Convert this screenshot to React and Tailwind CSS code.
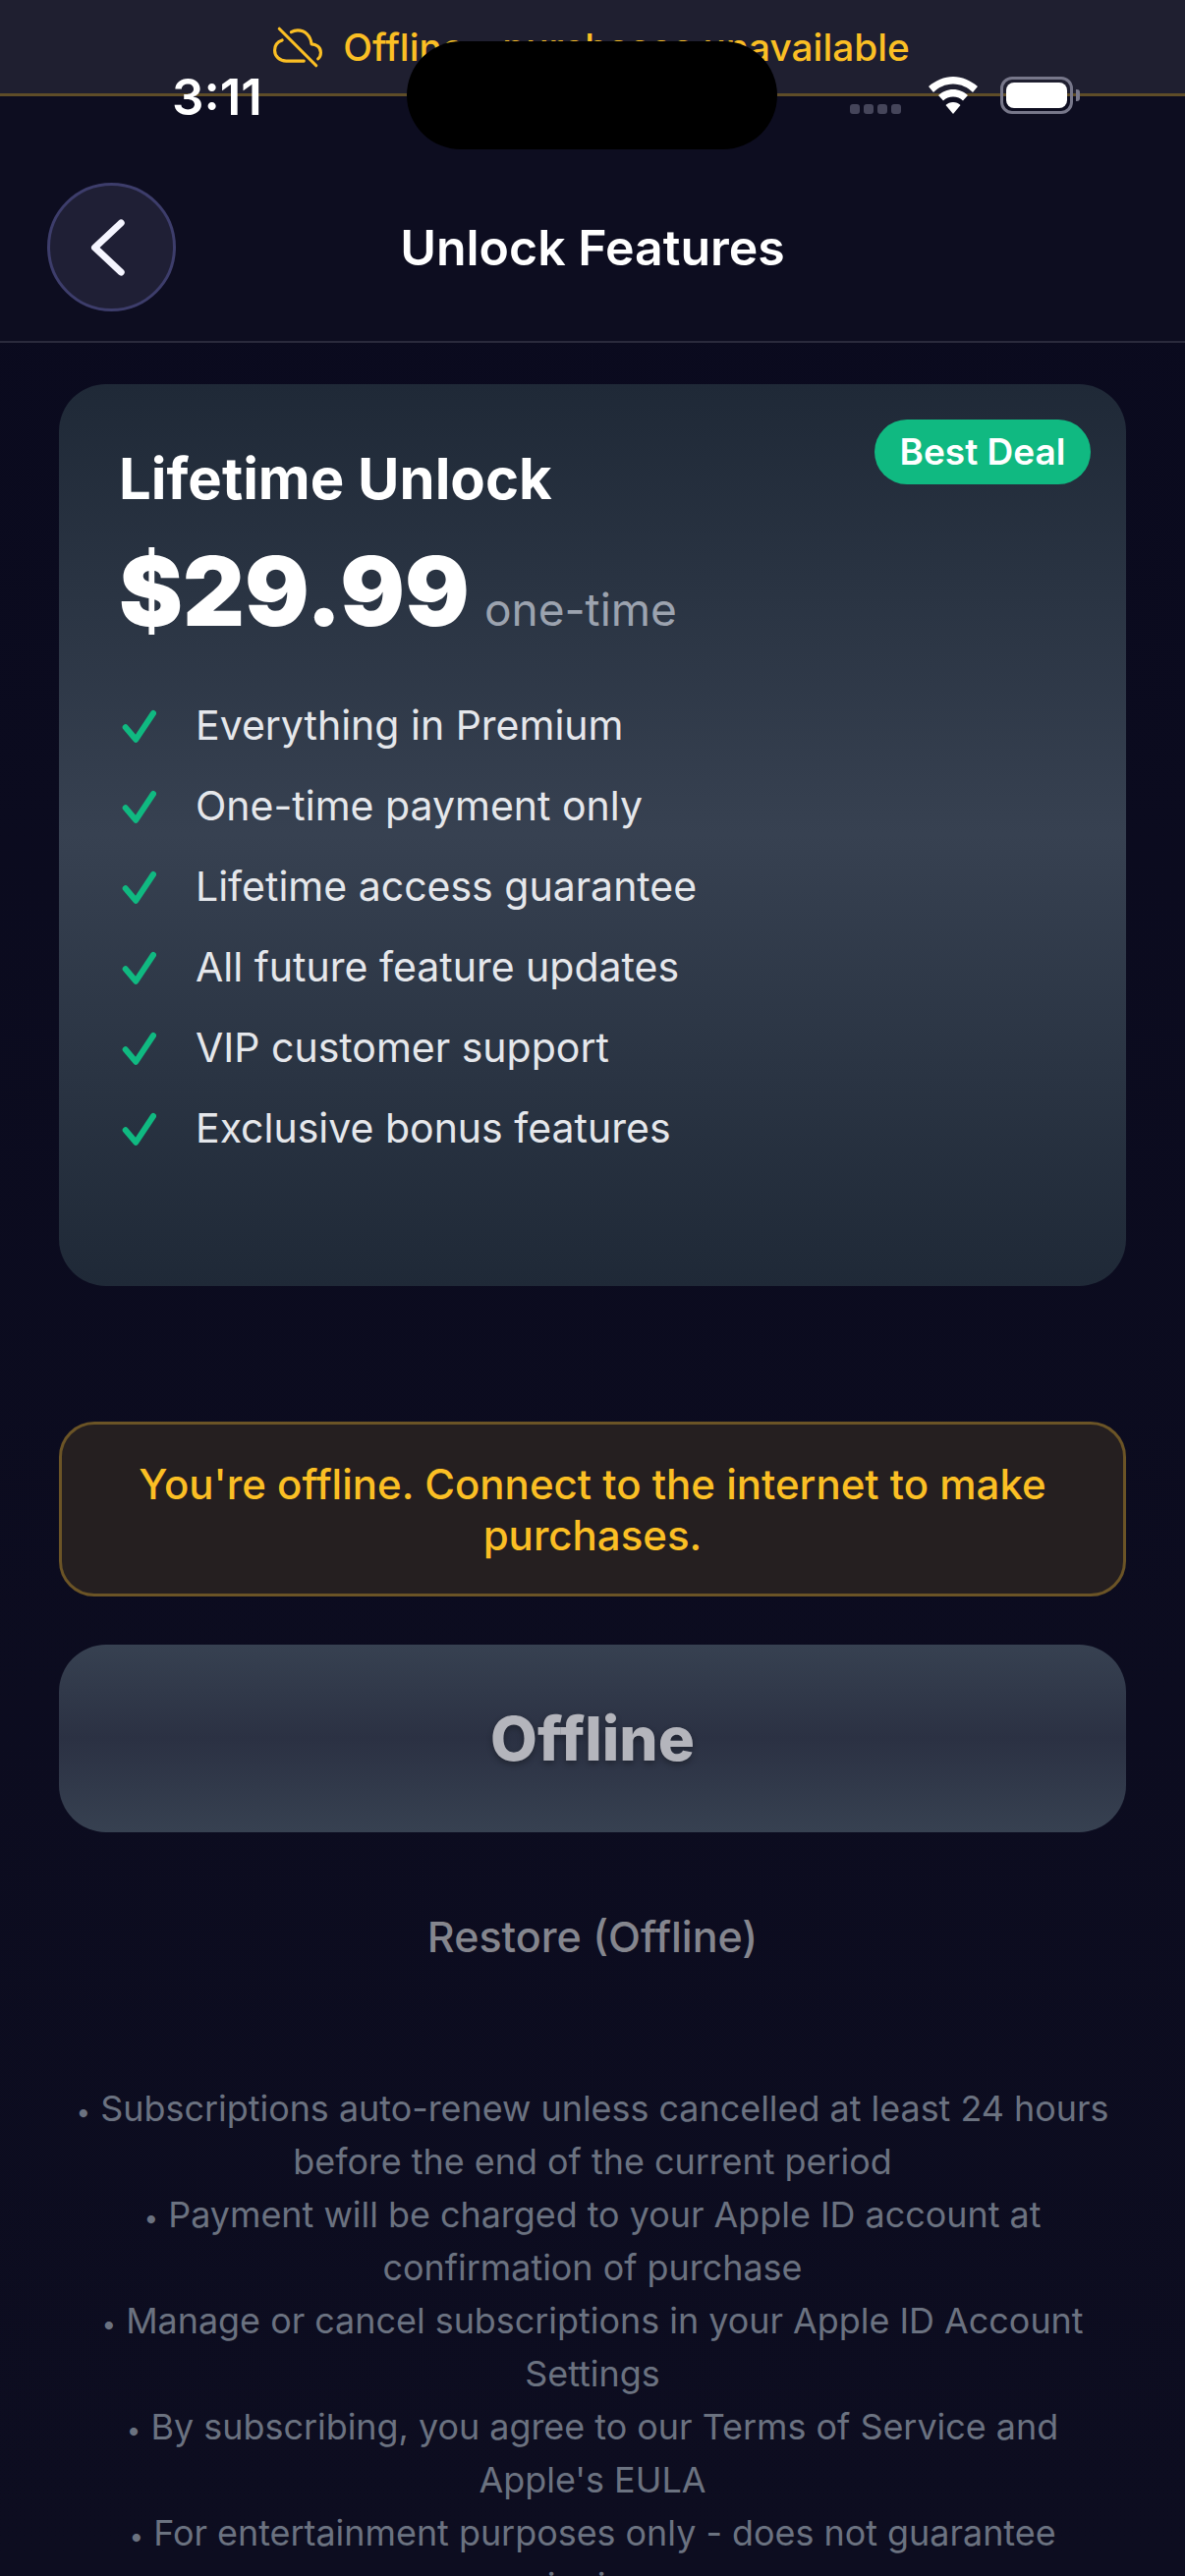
import { IoCloudOfflineOutline } from "react-icons/io5";

const features = [
  "Everything in Premium",
  "One-time payment only",
  "Lifetime access guarantee",
  "All future feature updates",
  "VIP customer support",
  "Exclusive bonus features",
];

const terms = [
  "Subscriptions auto-renew unless cancelled at least 24 hours before the end of the current period",
  "Payment will be charged to your Apple ID account at confirmation of purchase",
  "Manage or cancel subscriptions in your Apple ID Account Settings",
  "By subscribing, you agree to our Terms of Service and Apple's EULA",
  "For entertainment purposes only - does not guarantee winnings",
];

function CheckIcon() {
  return (
    <svg className="w-[38px] h-[38px] shrink-0" viewBox="0 0 38 38" fill="none" stroke="#10b981" strokeWidth="6" strokeLinecap="round" strokeLinejoin="round">
      <path d="M6.700 21.300 L17.300 33.700 L35 7" />
    </svg>
  );
}

function StatusBar() {
  return (
    <div className="absolute top-0 left-0 w-full h-[152px]">
      <span className="absolute left-[175px] top-[72px] text-[51px] leading-[54px] font-semibold text-white">3:11</span>
      <div className="absolute left-[414px] top-[42px] w-[377px] h-[110px] rounded-[55px] bg-black"></div>
      <div className="absolute left-[865px] top-[106px] flex gap-[4px]">
        <div className="w-[10px] h-[10px] rounded-[3px] bg-[#45455a]"></div>
        <div className="w-[10px] h-[10px] rounded-[3px] bg-[#45455a]"></div>
        <div className="w-[10px] h-[10px] rounded-[3px] bg-[#45455a]"></div>
        <div className="w-[10px] h-[10px] rounded-[3px] bg-[#45455a]"></div>
      </div>
      <svg className="absolute left-[945px] top-[78px]" width="50" height="38" viewBox="0 0 50 38" fill="#ffffff">
        <path d="M25 0 C34 0 43 4 50 10 L45 16 C40 11 33 7.500 25 7.500 C17 7.500 10 11 5 16 L0 10 C7 4 16 0 25 0 Z" />
        <path d="M25 13 C31 13 36 15.500 40 19 L35 24.500 C32.500 22 29 20.500 25 20.500 C21 20.500 17.500 22 15 24.500 L10 19 C14 15.500 19 13 25 13 Z" />
        <path d="M25 26 C28 26 30.500 27 32.500 29 L25 38 L17.500 29 C19.500 27 22 26 25 26 Z" />
      </svg>
      <div className="absolute left-[1018px] top-[78px] w-[74px] h-[38px] rounded-[12px] border-[3px] border-[#77778a] p-[3px]">
        <div className="w-full h-full rounded-[8px] bg-white"></div>
      </div>
      <div className="absolute left-[1095px] top-[91px] w-[4px] h-[12px] rounded-r-[3px] bg-[#77778a]"></div>
    </div>
  );
}

export default function App() {
  return (
    <div className="relative w-[1206px] h-[2622px] overflow-hidden bg-gradient-to-b from-[#0a0a1e] to-[#0d0d20] font-['Inter',sans-serif]">
      {/* Offline banner */}
      <div className="h-[98px] bg-[#1f1f30] border-b-[3px] border-[#5f4d28] flex items-start justify-center gap-[21px] pt-[19px] pr-[5px]">
        <IoCloudOfflineOutline size={50} className="text-[#fbbf24] mt-[4px] ml-[3px]" />
        <span className="text-[38.800px] leading-[58px] font-medium text-[#fbbf24]">Offline - purchases unavailable</span>
      </div>

      {/* Header */}
      <div className="h-[251px] bg-[#0d0d20] border-b-[2px] border-[#2a2a3c] flex items-end px-[48px] pb-[30px]">
        <div className="w-[131px] h-[131px] rounded-full bg-[#1f1f35] border-[3px] border-[#3d3d6b] flex items-center justify-center">
          <svg width="48" height="62" viewBox="0 0 48 62" fill="none" stroke="#f5f5ff" strokeWidth="7" strokeLinecap="round" strokeLinejoin="round">
            <path d="M33.200 6 L6.500 31 L33.200 56" />
          </svg>
        </div>
        <div className="flex-1 h-[131px] flex items-center justify-center text-[50px] leading-[60px] font-semibold text-white pr-[131px]">Unlock Features</div>
      </div>

      {/* Plan card */}
      <div className="px-[60px] pt-[42px]">
        <div className="relative h-[918px] rounded-[48px] bg-gradient-to-b from-[#1f2937] via-[#374151] to-[#1f2937] px-[61px] pt-[60px]">
          <div className="absolute right-[36px] top-[36px] h-[66px] w-[220px] rounded-full bg-[#10b981] flex items-center justify-center text-[37px] font-semibold text-white">Best Deal</div>
          <div className="text-[58px] leading-[72px] font-bold text-white">Lifetime Unlock</div>
          <div className="flex items-baseline gap-[15px] mt-[25px]">
            <span className="text-[97.500px] leading-[108px] font-black text-white">$29.99</span>
            <span className="text-[46px] leading-[60px] text-[#9ca3af]">one-time</span>
          </div>
          <div className="flex flex-col gap-[22px] mt-[52px]">
            {features.map((f) => (
              <div key={f} className="flex items-center gap-[40px] h-[60px]">
                <CheckIcon />
                <span className="text-[41px] leading-[60px] text-[#e5e7eb]">{f}</span>
              </div>
            ))}
          </div>
        </div>

        {/* Offline warning */}
        <div className="mt-[138px] h-[178px] rounded-[36px] bg-[#251f20] border-[3px] border-[#6b5426] flex items-center justify-center px-[60px] pt-[2px] text-center text-[42px] leading-[52px] font-medium text-[#fbbf24]">
          You're offline. Connect to the internet to make purchases.
        </div>

        {/* Buy button */}
        <div className="mt-[49px] h-[191px] rounded-[48px] bg-gradient-to-b from-[#374151] via-[#2b3143] to-[#374151] flex items-center justify-center text-[62px] font-extrabold text-[#b4b5bc] [text-shadow:0_3px_6px_rgba(0,0,0,0.3)]">
          Offline
        </div>

        <div className="mt-[70px] text-center text-[43px] leading-[72px] font-medium text-[#85868e]">Restore (Offline)</div>

        {/* Terms */}
        <div className="mt-[112px] px-[10px] text-center text-[35.900px] leading-[54px] text-[#6b7280]">
          {terms.map((t) => (
            <div key={t}><span className="text-[26px] leading-none">•</span> {t}</div>
          ))}
        </div>
      </div>

      <StatusBar />
    </div>
  );
}
